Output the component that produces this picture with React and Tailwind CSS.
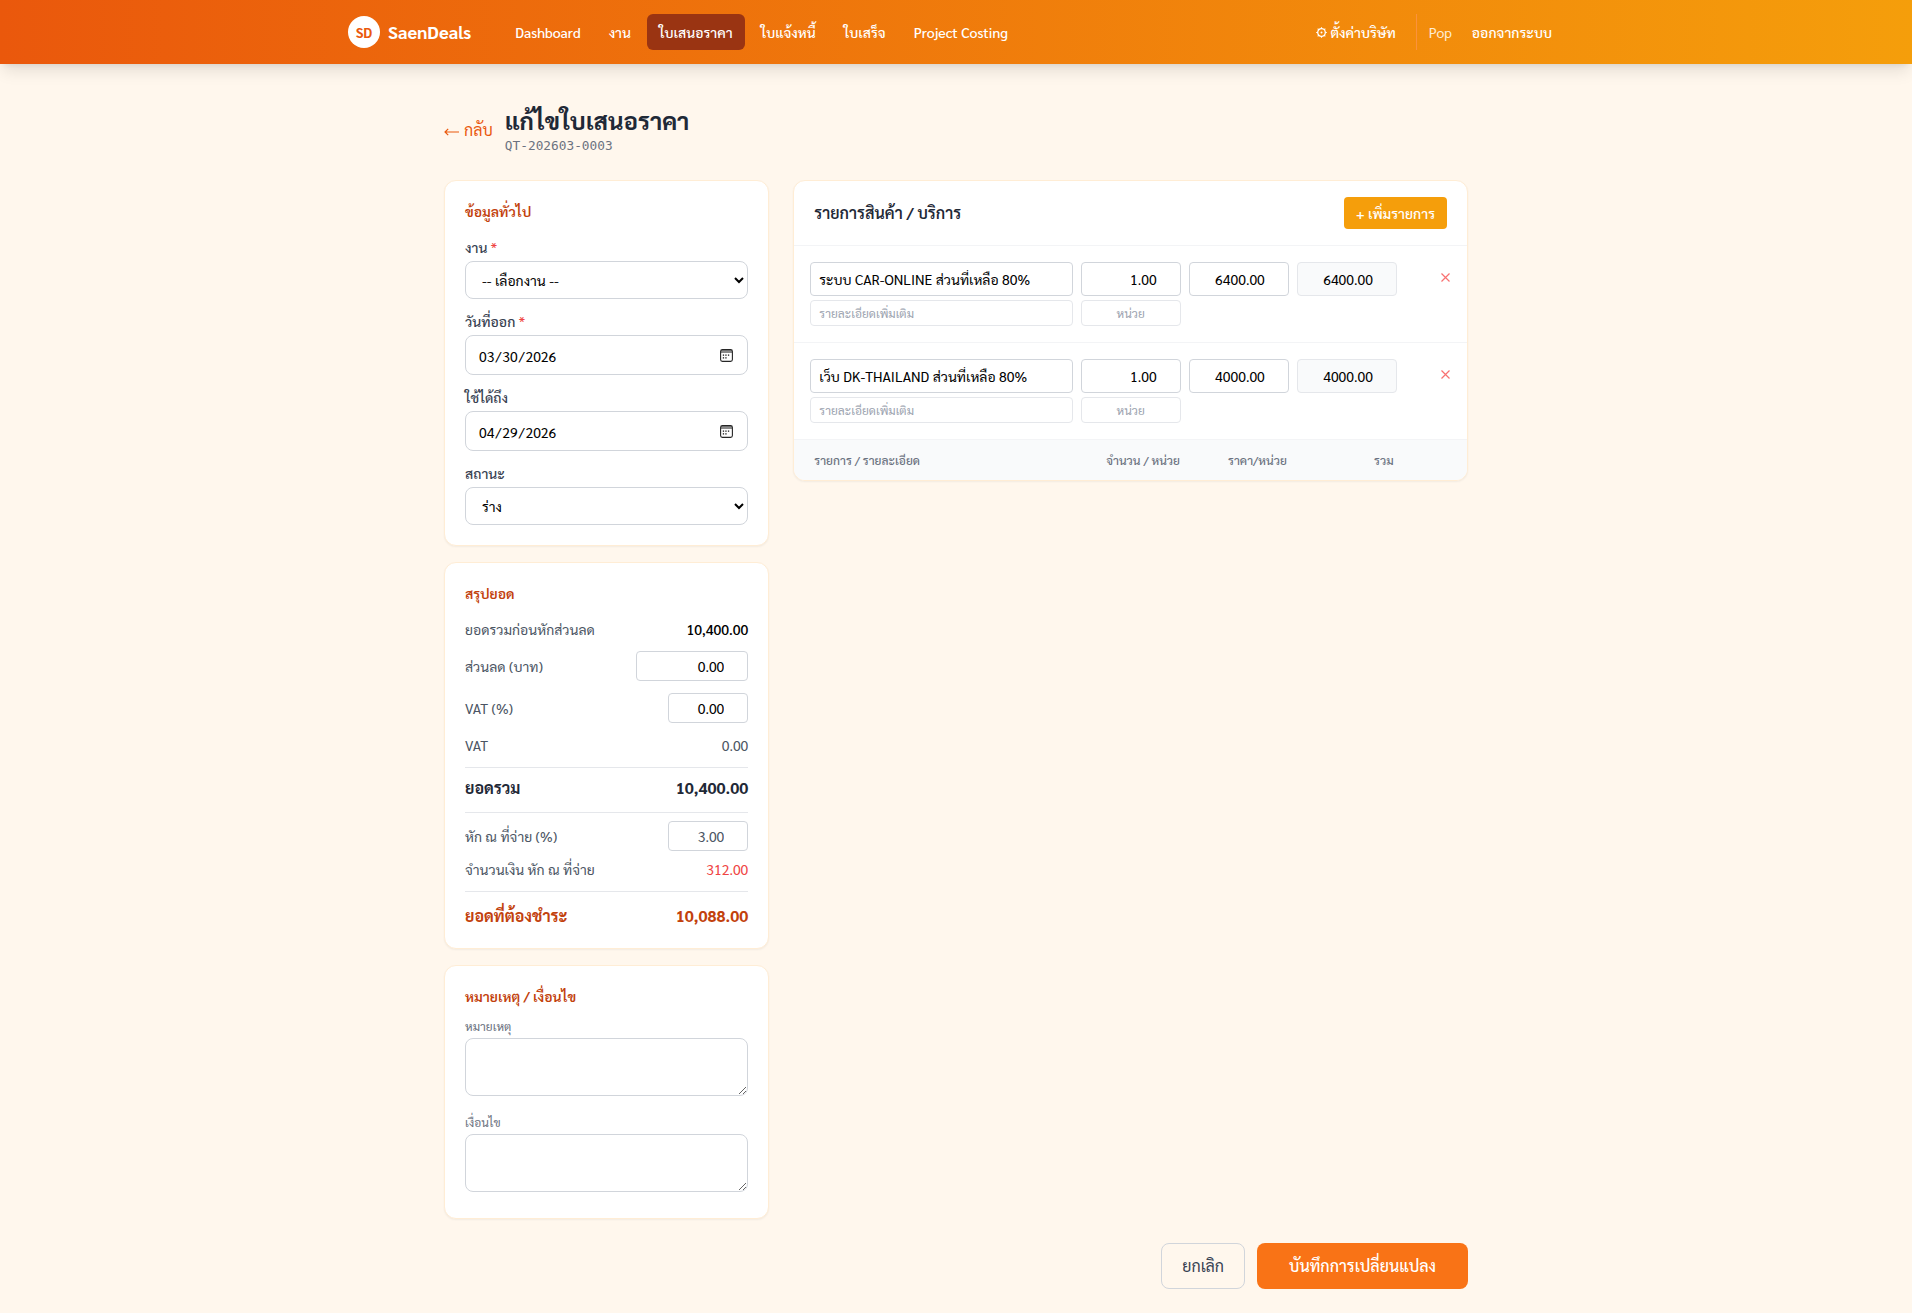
const LINKS = [
  { label: "Dashboard" },
  { label: "งาน" },
  { label: "ใบเสนอราคา", active: true },
  { label: "ใบแจ้งหนี้" },
  { label: "ใบเสร็จ" },
  { label: "Project Costing" },
];

const ITEMS = [
  { name: "ระบบ CAR-ONLINE ส่วนที่เหลือ 80%", price: "6400.00" },
  { name: "เว็บ DK-THAILAND ส่วนที่เหลือ 80%", price: "4000.00" },
];

const FIELD = "block w-full rounded-lg border border-[#d1d5db] bg-white px-3 text-sm text-black";
const SMALL = "h-[30px] rounded border border-[#d1d5db] bg-white px-2 text-right text-sm";

function GearIcon() {
  return (
    <svg viewBox="0 0 11 11" className="size-[11px]" fill="none" stroke="currentColor">
      <circle cx="5.5" cy="5.5" r="3.8" strokeWidth="1.3" />
      <circle cx="5.5" cy="5.5" r="1" fill="currentColor" stroke="none" />
      <path
        d="M5.5 0.2v1.6M5.5 9.2v1.6M0.2 5.5h1.6M9.2 5.5h1.6M1.7 1.7l1.1 1.1M8.2 8.2l1.1 1.1M1.7 9.3l1.1-1.1M8.2 2.8l1.1-1.1"
        strokeWidth="1.1"
      />
    </svg>
  );
}

function ArrowIcon() {
  return (
    <svg viewBox="0 0 15 8" className="mt-1 h-2 w-[15px]" fill="none" stroke="currentColor" strokeWidth="1.2">
      <path d="M1 4h14M4.2 0.8L1 4l3.2 3.2" />
    </svg>
  );
}

function CrossIcon() {
  return (
    <svg viewBox="0 0 9 9" className="size-[9px]" fill="none" stroke="currentColor" strokeWidth="1.2">
      <path d="M0.5 0.5l8 8M8.5 0.5l-8 8" />
    </svg>
  );
}

function CalendarIcon() {
  return (
    <svg viewBox="0 0 13 13" className="pointer-events-none absolute top-[14px] right-[15px] size-[13px]">
      <rect x="1" y="1" width="11" height="3" fill="#8a8a8a" />
      <rect x="0.6" y="0.6" width="11.8" height="11.8" rx="1.8" fill="none" stroke="#262626" strokeWidth="1.1" />
      <path d="M5.3 6.2h1.3M7.9 6.2h1.3M2.8 6.2h1.3M2.8 8.8h1.3M5.3 8.8h1.3" stroke="#111111" strokeWidth="1.3" />
    </svg>
  );
}

function NavBar() {
  return (
    <nav className="h-16 bg-[linear-gradient(90deg,#ea580c,#f59e0b)] shadow-[0_10px_15px_-3px_rgba(0,0,0,0.1),0_4px_6px_-4px_rgba(0,0,0,0.1)]">
      <div className="mx-auto flex h-16 max-w-7xl items-center justify-between px-8 text-white">
        <div className="flex items-center gap-8">
          <div className="flex items-center gap-2">
            <div className="flex size-8 items-center justify-center rounded-full bg-white text-sm font-bold text-[#ea580c]">SD</div>
            <span className="text-lg font-bold">SaenDeals</span>
          </div>
          <div className="flex items-center gap-1">
            {LINKS.map((l) => (
              <a
                key={l.label}
                className={
                  l.active
                    ? "rounded-md bg-[#9a3412] px-3 py-2 text-sm font-medium"
                    : "rounded-md px-3 py-2 text-sm font-medium"
                }
              >
                {l.label}
              </a>
            ))}
          </div>
        </div>
        <div className="flex items-center gap-2">
          <a className="flex items-center gap-[3px] px-3 py-2 text-sm font-medium">
            <GearIcon />
            <span>ตั้งค่าบริษัท</span>
          </a>
          <div className="flex items-center gap-2 border-l border-[#fb923c] pl-3">
            <span className="text-sm text-[#ffedd5]">Pop</span>
            <a className="px-3 py-2 text-sm font-medium">ออกจากระบบ</a>
          </div>
        </div>
      </div>
    </nav>
  );
}

function Card({ title, children }) {
  return (
    <section className="rounded-xl border border-[#ffedd5] bg-white p-5 shadow-[0_1px_2px_0_rgba(0,0,0,0.05)]">
      <h2 className="text-sm font-semibold text-[#c2410c]">{title}</h2>
      {children}
    </section>
  );
}

function Label({ children, required }) {
  return (
    <label className="mb-1 block text-sm font-medium text-[#374151]">
      {children}
      {required && <span className="text-[#ef4444]"> *</span>}
    </label>
  );
}

function DateField({ value }) {
  return (
    <div className="relative">
      <input
        type="date"
        defaultValue={value}
        className={FIELD + " h-10 pt-px [&::-webkit-calendar-picker-indicator]:opacity-0"}
      />
      <CalendarIcon />
    </div>
  );
}

function GeneralCard() {
  return (
    <Card title="ข้อมูลทั่วไป">
      <div className="mt-4 flex flex-col gap-3">
        <div>
          <Label required>งาน</Label>
          <select className={FIELD + " h-[38px]"}>
            <option>-- เลือกงาน --</option>
          </select>
        </div>
        <div>
          <Label required>วันที่ออก</Label>
          <DateField value="2026-03-30" />
        </div>
        <div>
          <Label>ใช้ได้ถึง</Label>
          <DateField value="2026-04-29" />
        </div>
        <div>
          <Label>สถานะ</Label>
          <select className={FIELD + " h-[38px]"}>
            <option>ร่าง</option>
          </select>
        </div>
      </div>
    </Card>
  );
}

function SummaryCard() {
  return (
    <Card title="สรุปยอด">
      <div className="mt-4 flex flex-col gap-3 text-sm text-[#4b5563]">
        <div className="flex items-center justify-between">
          <span>ยอดรวมก่อนหักส่วนลด</span>
          <span className="font-medium text-black">10,400.00</span>
        </div>
        <div className="flex items-center justify-between">
          <span>ส่วนลด (บาท)</span>
          <input type="number" step="0.01" defaultValue="0.00" className={SMALL + " w-28 text-black"} />
        </div>
        <div className="flex items-center justify-between">
          <span>VAT (%)</span>
          <input type="number" step="0.01" defaultValue="0.00" className={SMALL + " w-20 text-black"} />
        </div>
        <div className="flex items-center justify-between">
          <span>VAT</span>
          <span>0.00</span>
        </div>
        <div className="flex items-center justify-between border-t border-[#e5e7eb] pt-2 text-base font-bold text-[#1f2937]">
          <span>ยอดรวม</span>
          <span>10,400.00</span>
        </div>
        <div className="flex flex-col gap-2 border-t border-[#e5e7eb] pt-2">
          <div className="flex items-center justify-between">
            <span>หัก ณ ที่จ่าย (%)</span>
            <input type="number" step="0.01" defaultValue="3.00" className={SMALL + " w-20"} />
          </div>
          <div className="flex items-center justify-between">
            <span>จำนวนเงิน หัก ณ ที่จ่าย</span>
            <span className="text-[#ef4444]">312.00</span>
          </div>
        </div>
        <div className="flex items-center justify-between border-t border-[#e5e7eb] pt-3 text-base font-bold text-[#c2410c]">
          <span>ยอดที่ต้องชำระ</span>
          <span>10,088.00</span>
        </div>
      </div>
    </Card>
  );
}

function NotesCard() {
  return (
    <Card title="หมายเหตุ / เงื่อนไข">
      <div className="mt-3 flex flex-col gap-[18px] pb-1.5">
        {["หมายเหตุ", "เงื่อนไข"].map((n) => (
          <div key={n}>
            <label className="mb-1 block text-xs text-[#6b7280]">{n}</label>
            <textarea className={FIELD + " h-[58px] py-2"} />
          </div>
        ))}
      </div>
    </Card>
  );
}

function ItemRow({ item }) {
  const amount = "h-[34px] w-full rounded border px-2 text-right text-sm text-black";
  const extra = "h-[26px] w-full rounded border border-[#e5e7eb] px-2 text-xs placeholder:text-[#9ca3af]";
  return (
    <div className="grid grid-cols-12 items-start gap-2 border-b border-[#f3f4f6] p-4">
      <div className="col-span-5 flex flex-col gap-1">
        <input defaultValue={item.name} className="h-[34px] w-full rounded border border-[#d1d5db] px-2 text-sm text-black" />
        <input placeholder="รายละเอียดเพิ่มเติม" className={extra} />
      </div>
      <div className="col-span-2 flex flex-col gap-1">
        <input type="number" step="0.01" defaultValue="1.00" className={amount + " border-[#d1d5db]"} />
        <input placeholder="หน่วย" className={extra + " text-center"} />
      </div>
      <div className="col-span-2">
        <input type="number" step="0.01" defaultValue={item.price} className={amount + " border-[#d1d5db]"} />
      </div>
      <div className="col-span-2">
        <input type="number" step="0.01" defaultValue={item.price} className={amount + " border-[#e5e7eb] bg-[#f9fafb]"} />
      </div>
      <div className="flex justify-end pt-[11px] pr-px">
        <button className="text-[#f87171]" aria-label="ลบ">
          <CrossIcon />
        </button>
      </div>
    </div>
  );
}

function ItemsCard() {
  return (
    <section className="overflow-hidden rounded-xl border border-[#ffedd5] bg-white shadow-[0_1px_2px_0_rgba(0,0,0,0.05)]">
      <div className="flex items-center justify-between border-b border-[#f3f4f6] px-5 py-4">
        <h2 className="text-base font-semibold text-[#1f2937]">รายการสินค้า / บริการ</h2>
        <button className="h-8 rounded bg-[#f59e0b] px-3 text-sm font-medium text-white">+ เพิ่มรายการ</button>
      </div>
      {ITEMS.map((i) => (
        <ItemRow key={i.name} item={i} />
      ))}
      <div className="grid grid-cols-12 gap-2 bg-[#f9fafb] px-5 py-3 text-xs font-medium text-[#6b7280]">
        <span className="col-span-5">รายการ / รายละเอียด</span>
        <span className="col-span-2 text-right">จำนวน / หน่วย</span>
        <span className="col-span-2 text-right">ราคา/หน่วย</span>
        <span className="col-span-2 text-right">รวม</span>
      </div>
    </section>
  );
}

export default function App() {
  return (
    <div className="min-h-[1313px] bg-[#fff7ed] font-[Sarabun,'Noto_Sans_Thai_Looped','Noto_Sans',sans-serif]">
      <NavBar />
      <main className="mx-auto max-w-5xl pt-10">
        <header className="flex items-center gap-3">
          <a className="flex items-center gap-[5px] text-base text-[#ea580c]">
            <ArrowIcon />
            <span>กลับ</span>
          </a>
          <div>
            <h1 className="text-2xl font-bold text-[#1f2937]">แก้ไขใบเสนอราคา</h1>
            <p className="font-['DejaVu_Sans_Mono',monospace] text-[12.8px] leading-5 text-[#6b7280]">QT-202603-0003</p>
          </div>
        </header>
        <div className="mt-6 grid grid-cols-3 items-start gap-6">
          <div className="flex flex-col gap-4">
            <GeneralCard />
            <SummaryCard />
            <NotesCard />
          </div>
          <div className="col-span-2">
            <ItemsCard />
          </div>
        </div>
        <div className="mt-6 flex justify-end gap-3">
          <button className="h-[46px] rounded-lg border border-[#d1d5db] px-5 text-base text-[#374151]">ยกเลิก</button>
          <button className="h-[46px] rounded-lg bg-[#f97316] px-8 text-base font-medium text-white">บันทึกการเปลี่ยนแปลง</button>
        </div>
      </main>
    </div>
  );
}
